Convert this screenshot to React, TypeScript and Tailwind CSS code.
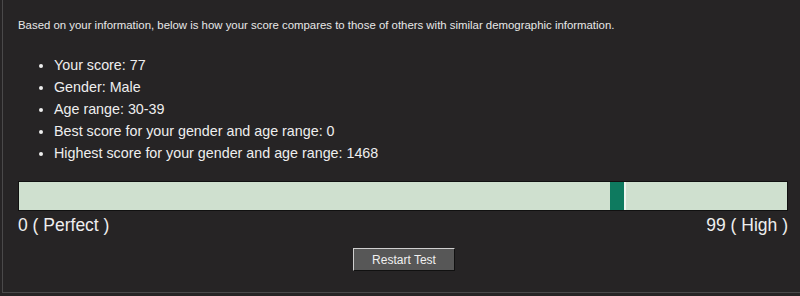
import React from 'react';

const items = [
  'Your score: 77',
  'Gender: Male',
  'Age range: 30-39',
  'Best score for your gender and age range: 0',
  'Highest score for your gender and age range: 1468',
];

export default function App() {
  return (
    <div className="w-[800px] h-[296px] bg-[#262425] font-['Liberation_Sans',Arial,sans-serif] text-[#eeeeee]">
      <div className="ml-[2px] h-[293px] border-l border-b border-[#4a494a] pl-[15px] pr-[12px] pt-[17px]">
        <p className="text-[11.4px] leading-[16px] text-[#e8e8e8]">
          Based on your information, below is how your score compares to those of others with similar demographic information.
        </p>
        <ul className="mt-[21px] pl-[36px] list-disc text-[14.3px] leading-[22px] marker:text-[13px]">
          {items.map((t) => (
            <li key={t}>{t}</li>
          ))}
        </ul>
        <div className="mt-[17px] flex h-[30px] border border-[#111] bg-[#cfe0cf]">
          <div className="w-[591px]" />
          <div className="w-[14px] bg-[#0e7a5f]" />
          <div className="w-[2px] bg-[#eef5ee]" />
        </div>
        <div className="flex justify-between text-[17.5px] leading-[22px] mt-[3px]">
          <span>0 ( Perfect )</span>
          <span>99 ( High )</span>
        </div>
        <div className="flex justify-center mt-[12px]">
          <button className="w-[102px] h-[23px] bg-[#575757] border border-t-[#cfcfcf] border-l-[#cfcfcf] border-r-[#111] border-b-[#111] text-[12px] text-[#f0f0f0] ml-[2px]">
            Restart Test
          </button>
        </div>
      </div>
    </div>
  );
}
